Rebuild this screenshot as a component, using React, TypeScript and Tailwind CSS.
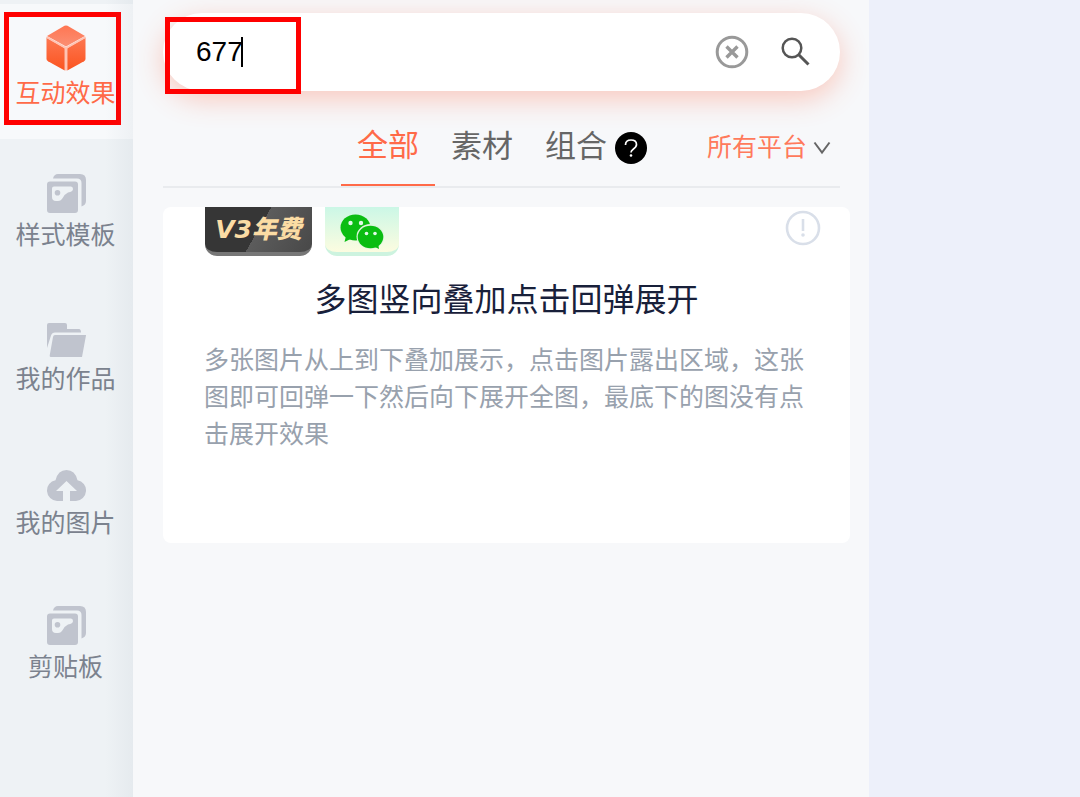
import type { ReactNode } from 'react';

interface NavItemProps {
  label: string;
  icon: ReactNode;
  active?: boolean;
}

function CubeIcon() {
  return (
    <svg width="40" height="46" viewBox="0 0 40 46" aria-hidden="true">
      <defs>
        <linearGradient id="cube-top" x1="0" y1="0" x2="0" y2="1">
          <stop offset="0" stopColor="#ff7652" />
          <stop offset="1" stopColor="#fb8f74" />
        </linearGradient>
        <linearGradient id="cube-side" x1="0" y1="0" x2="0" y2="1">
          <stop offset="0" stopColor="#fd7750" />
          <stop offset="1" stopColor="#fb5420" />
        </linearGradient>
      </defs>
      <path d="M18.500 .8q1.500-.8 3 0L39 11 20 21.500 1 11z" fill="url(#cube-top)" />
      <path d="M.5 12.800 18.700 23v22.500L2 36.200Q.5 35.300.5 34z" fill="url(#cube-side)" />
      <path d="M39.500 12.800 21.300 23v22.500L38 36.200q1.500-.9 1.500-2.200z" fill="url(#cube-side)" />
      <path d="M.5 12 20 23 39.500 12M20 23v22.500" fill="none" stroke="#ffc3b3" strokeWidth="2" />
    </svg>
  );
}

function PicturesIcon() {
  return (
    <svg width="40" height="40" viewBox="0 0 40 40" fill="#c0c4ce" aria-hidden="true">
      <path d="M7 5.500Q8 1 12 1h22q6 0 6 6v21q0 4-4.500 5.500V10q0-4.500-4.500-4.500z" />
      <path
        fillRule="evenodd"
        d="M4 8.500h25q3 0 3 3V37q0 3-3 3H4q-3 0-3-3V11.500q0-3 3-3zm4 5q-2 0-2 2V24q0 4 4 4h2q3 0 5-3.500t5-5q5-1 5-3.500 0-2.500-2-2.500zm3.500 3.500a2.800 2.800 0 1 1 0 5.600 2.800 2.800 0 0 1 0-5.600z"
      />
    </svg>
  );
}

function FolderIcon() {
  return (
    <svg width="40" height="34" viewBox="0 0 40 34" fill="#c0c4ce" aria-hidden="true">
      <path d="M1 2q0-2 2-2h16q2 0 2 2v4h12q2 0 2 3.500H9q-3 0-4 3L1 25z" />
      <path d="M9 12h31q0 1-.3 2L36 34H5q-1.500 0-1.300-1.500L7 14q.3-2 2-2z" />
    </svg>
  );
}

function CloudIcon() {
  return (
    <svg width="40" height="31" viewBox="0 0 40 31" aria-hidden="true">
      <path
        d="M11 31A10.500 10.500 0 0 1 9.500 10.200Q12 0 20.500 0T31.500 10.200A10.500 10.500 0 0 1 30 31z"
        fill="#c0c4ce"
      />
      <path d="M20.500 11 31 21h-7v10h-7V21h-7z" fill="#eef2f5" />
    </svg>
  );
}

function WechatIcon() {
  return (
    <svg width="44" height="36" viewBox="0 0 44 36" fill="#0bbd12" aria-hidden="true">
      <ellipse cx="15.500" cy="13.500" rx="15" ry="13" />
      <path d="m6 22-1.500 6 7-3.500z" />
      <ellipse cx="30.500" cy="22.500" rx="14" ry="12.500" fill="#dff5df" />
      <ellipse cx="30.500" cy="23" rx="12.800" ry="11.300" />
      <path d="m33 32 6 3-1-6z" />
      <g fill="#e2faea">
        <circle cx="10.500" cy="9" r="2.200" />
        <circle cx="21" cy="9" r="2.200" />
        <circle cx="26.500" cy="19.500" r="1.800" />
        <circle cx="35" cy="19.500" r="1.800" />
      </g>
    </svg>
  );
}

function NavItem({ label, icon, active = false }: NavItemProps) {
  return (
    <button
      type="button"
      className={
        active
          ? 'relative flex h-[135px] w-full flex-col items-center justify-end gap-[6px] bg-[#f7f9fb] pr-[2px] pb-[30px] text-[#ff6a48]'
          : 'flex h-36 w-full flex-col items-center justify-end gap-[6px] pr-[2px] pb-8 text-[#7b828e]'
      }
    >
      {icon}
      <span className="text-[25px] leading-8">{label}</span>
      {active && (
        <span className="absolute top-2 right-3 bottom-[14px] left-1 border-[5px] border-[#ff0000]" />
      )}
    </button>
  );
}

function Sidebar() {
  return (
    <nav className="relative w-[133px] shrink-0 bg-[#eef2f5] pt-1">
      <NavItem label="互动效果" icon={<CubeIcon />} active />
      <NavItem label="样式模板" icon={<PicturesIcon />} />
      <NavItem label="我的作品" icon={<FolderIcon />} />
      <NavItem label="我的图片" icon={<CloudIcon />} />
      <NavItem label="剪贴板" icon={<PicturesIcon />} />
      <div className="pointer-events-none absolute inset-y-0 right-0 w-7 bg-linear-to-r from-transparent to-[#8090a0]/8" />
    </nav>
  );
}

function SearchBar() {
  return (
    <div className="relative mr-[29px] ml-[30px] flex h-[78px] items-center rounded-full bg-white pr-[29px] pl-[33px] shadow-[0_8px_28px_rgba(255,90,50,0.3)]">
      <input
        type="text"
        aria-label="搜索"
        defaultValue="677"
        className="h-10 [field-sizing:content] text-[28px] text-black caret-transparent outline-none"
      />
      <span className="-ml-[2px] h-[30px] w-[2px] bg-black" />
      <button type="button" aria-label="清除" className="ml-auto">
        <svg width="34" height="34" viewBox="0 0 34 34" fill="none" stroke="#999" strokeWidth="3">
          <circle cx="17" cy="17" r="14.800" />
          <path d="m11.500 11.500 11 11m0-11-11 11" strokeWidth="3.400" />
        </svg>
      </button>
      <button type="button" aria-label="查找" className="ml-8">
        <svg width="30" height="30" viewBox="0 0 30 30" fill="none" stroke="#555" strokeWidth="2.500">
          <circle cx="11" cy="11" r="9.300" />
          <path d="m17.500 17.500 10 10" strokeWidth="3" />
        </svg>
      </button>
      <div className="pointer-events-none absolute top-1 -bottom-[3px] left-[2px] w-[136px] border-[5px] border-[#ff0000]" />
    </div>
  );
}

function FilterBar() {
  return (
    <div className="mt-4 mr-[29px] ml-[30px] flex h-[81px] items-stretch justify-end border-b-2 border-[#e9ebee] text-[31px] text-[#666]">
      <button type="button" className="border-b-2 border-[#ff6a48] px-4 pt-[2px] text-[#ff6a48]">
        全部
      </button>
      <button type="button" className="px-4 pt-[2px]">
        素材
      </button>
      <button type="button" className="pt-[2px] pr-2 pl-4">
        组合
      </button>
      <button type="button" aria-label="帮助" className="mr-[60px] pt-[2px]">
        <svg width="32" height="32" viewBox="0 0 32 32" fill="none">
          <circle cx="16" cy="16" r="16" fill="#000" />
          <path
            d="M10.500 13c0-3.200 2.300-5 5.500-5s5.500 1.800 5.500 4.600c0 2.400-1.500 3.400-3.300 4.600-1.600 1.100-2.200 1.800-2.200 3.300"
            stroke="#fff"
            strokeWidth="1.700"
          />
          <circle cx="16" cy="23.500" r="1.300" fill="#fff" />
        </svg>
      </button>
      <div className="flex items-center gap-[6px] pt-[2px] pr-[9px]">
        <select
          aria-label="平台"
          className="[field-sizing:content] appearance-none bg-transparent text-[25px] text-[#ff7a5c] outline-none"
        >
          <option>所有平台</option>
        </select>
        <svg width="18" height="14" viewBox="0 0 18 14" fill="none" stroke="#666" strokeWidth="2">
          <path d="m1.500 1.500 7.500 10 7.500-10" />
        </svg>
      </div>
    </div>
  );
}

function EffectCard() {
  return (
    <article className="mt-[19px] mr-[19px] ml-[30px] min-h-[336px] rounded-lg bg-white px-[41px]">
      <div className="flex items-start gap-[13px] pl-px">
        <span className="flex h-[49px] w-[107px] items-center justify-center rounded-b-xl border-b-4 border-[#777] bg-[linear-gradient(120deg,#363636_50%,#5c5c5c_50%,#484848)] font-['DejaVu_Sans','Noto_Sans_CJK_SC',sans-serif] text-[25px] font-black text-[#fbdca4] italic">
          V3年费
        </span>
        <span className="flex h-[49px] w-[74px] items-center justify-center rounded-b-xl border-b-4 border-[#cdf3df] bg-linear-to-b from-[#cbf7e6] to-[#fcfce0] pt-1">
          <WechatIcon />
        </span>
        <button type="button" aria-label="详情" className="mt-[3px] -mr-3 ml-auto">
          <svg width="36" height="36" viewBox="0 0 36 36" fill="none" stroke="#d9dfe9" strokeWidth="2.600">
            <circle cx="18" cy="18" r="16" />
            <path d="M18 9v12" />
            <circle cx="18" cy="25" r="1.800" fill="#d9dfe9" stroke="none" />
          </svg>
        </button>
      </div>
      <h2 className="mt-6 text-center text-[32px] leading-10 text-[#18203a]">
        多图竖向叠加点击回弹展开
      </h2>
      <p className="mt-[22px] text-[25px] leading-[37px] text-[#98a1ad]">
        多张图片从上到下叠加展示，点击图片露出区域，这张图即可回弹一下然后向下展开全图，最底下的图没有点击展开效果
      </p>
    </article>
  );
}

export default function App() {
  return (
    <div className="flex min-h-screen bg-[#edf0fa] font-['Liberation_Sans','Noto_Sans_CJK_SC',sans-serif]">
      <Sidebar />
      <main className="min-w-0 flex-1 overflow-hidden bg-[#f7f8fa] pt-[13px]">
        <SearchBar />
        <FilterBar />
        <EffectCard />
      </main>
      <aside className="w-[211px] shrink-0" />
    </div>
  );
}
